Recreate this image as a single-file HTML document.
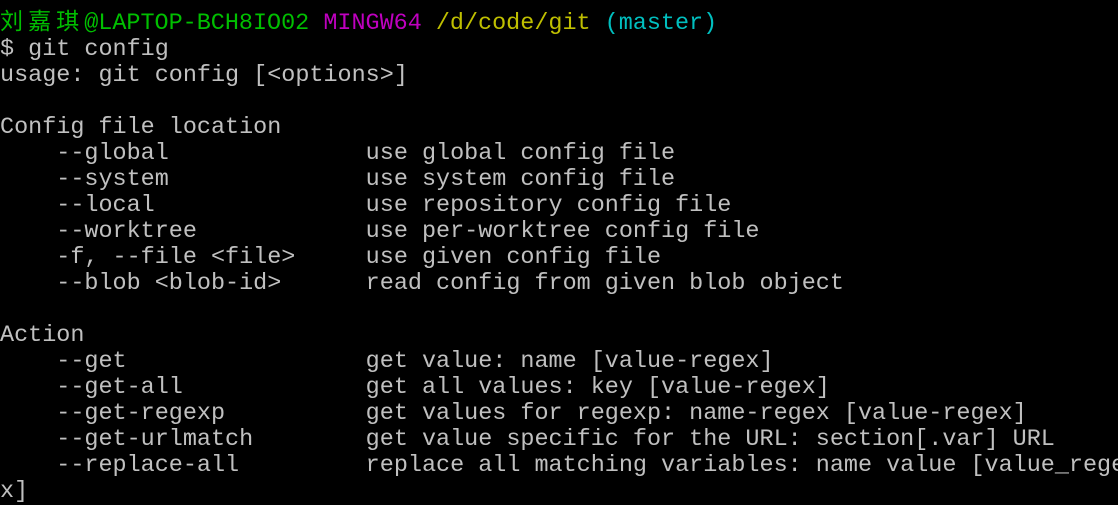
<!DOCTYPE html>
<html><head><meta charset="utf-8"><style>
html,body{margin:0;padding:0;background:#000;width:1118px;height:505px;overflow:hidden}
pre{margin:0;padding:6px 0 0 0;font-family:"Liberation Mono","Noto Sans CJK SC",monospace;font-size:23.45px;line-height:26px;color:#c0c0c0;white-space:pre}
.g{color:#00bf00}.m{color:#bf00bf}.y{color:#bfbf00}.c{color:#00bfbf}
.k{display:inline-block;width:28.07px;font-family:"Noto Sans CJK SC",sans-serif;font-size:23px}
</style></head><body><pre><span class="g"><span class="k">刘</span><span class="k">嘉</span><span class="k">琪</span>@LAPTOP-BCH8IO02</span> <span class="m">MINGW64</span> <span class="y">/d/code/git</span> <span class="c">(master)</span>
$ git config
usage: git config [&lt;options&gt;]

Config file location
    --global              use global config file
    --system              use system config file
    --local               use repository config file
    --worktree            use per-worktree config file
    -f, --file &lt;file&gt;     use given config file
    --blob &lt;blob-id&gt;      read config from given blob object

Action
    --get                 get value: name [value-regex]
    --get-all             get all values: key [value-regex]
    --get-regexp          get values for regexp: name-regex [value-regex]
    --get-urlmatch        get value specific for the URL: section[.var] URL
    --replace-all         replace all matching variables: name value [value_rege
x]
</pre></body></html>
